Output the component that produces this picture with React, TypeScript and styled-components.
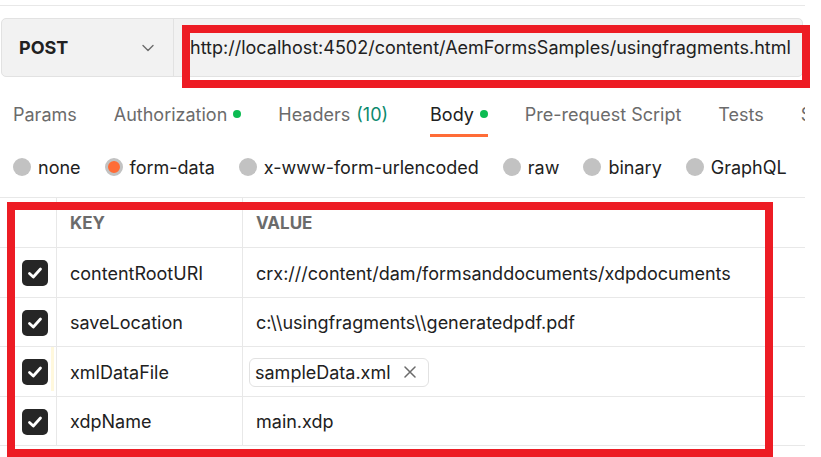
import React from "react";
import styled, { createGlobalStyle } from "styled-components";

const Global = createGlobalStyle`
  html, body { margin: 0; padding: 0; background: #ffffff; }
  body { font-family: Inter, "Noto Sans", "Liberation Sans", sans-serif; color: #212121; }
`;

const Page = styled.div`
  position: relative;
  width: 821px;
  height: 457px;
  overflow: hidden;
  background: #fff;
`;

const Content = styled.div`
  width: 805px;
  padding-top: 5px;
`;

const TopRule = styled.div`
  height: 0;
  border-top: 1px solid #e8e8e8;
`;

const RequestBar = styled.div`
  display: flex;
  height: 59px;
  margin: 12px 2px 0 1px;
  background: #f2f2f2;
  border: 1px solid #e2e2e2;
  border-radius: 5px;
  box-sizing: border-box;
`;

const MethodBox = styled.div`
  display: flex;
  align-items: center;
  justify-content: space-between;
  width: 172px;
  padding: 0 18px 0 17px;
  box-sizing: border-box;
  border-right: 1px solid #e2e2e2;
  font-weight: 700;
  font-size: 18px;
  color: #212121;
`;

const UrlBox = styled.div`
  flex: 1;
  display: flex;
  align-items: center;
  padding: 0 0 0 16px;
  font-size: 18px;
  color: #212121;
  white-space: nowrap;
  overflow: hidden;
`;

const Tabs = styled.div`
  display: flex;
  height: 60px;
  padding-left: 13px;
  gap: 37px;
  white-space: nowrap;
  overflow: hidden;
`;

const Tab = styled.div<{ $active?: boolean; $extra?: number }>`
  position: relative;
  display: flex;
  align-items: center;
  gap: 6px;
  height: 60px;
  margin-left: ${(p) => p.$extra ?? 0}px;
  padding-top: 14px;
  box-sizing: border-box;
  font-size: 18px;
  color: ${(p) => (p.$active ? "#212121" : "#6b6b6b")};
  &::after {
    content: "";
    display: ${(p) => (p.$active ? "block" : "none")};
    position: absolute;
    left: 0;
    right: 0;
    bottom: 0;
    height: 3px;
    background: #ff6c37;
  }
`;

const Dot = styled.span`
  width: 8px;
  height: 8px;
  border-radius: 50%;
  background: #0cbb52;
`;

const Count = styled.span`
  color: #0c8a6e;
`;

const RadioRow = styled.div`
  display: flex;
  align-items: center;
  height: 61px;
  padding-left: 13px;
  gap: 24px;
  border-bottom: 1px solid #e8e8e8;
  box-sizing: border-box;
  white-space: nowrap;
`;

const RadioItem = styled.div`
  display: flex;
  align-items: center;
  gap: 7px;
  font-size: 18px;
  color: #212121;
`;

const RadioCircle = styled.span<{ $checked?: boolean }>`
  width: 18px;
  height: 18px;
  border-radius: 50%;
  box-sizing: border-box;
  background: ${(p) => (p.$checked ? "#ff6c37" : "#c2c2c2")};
  border: ${(p) => (p.$checked ? "3px solid #c2c2c2" : "none")};
`;

const Table = styled.div`
  display: grid;
  grid-template-columns: 57px 186px 1fr;
`;

const Cell = styled.div<{ $head?: boolean; $last?: boolean; $check?: boolean; $h: number }>`
  position: relative;
  display: flex;
  align-items: center;
  height: ${(p) => p.$h}px;
  padding-left: ${(p) => (p.$check ? 15 : 13)}px;
  padding-top: ${(p) => (p.$head ? 0 : 1)}px;
  box-sizing: border-box;
  border-bottom: 1px solid #e8e8e8;
  border-right: ${(p) => (p.$last ? "none" : "1px solid #e8e8e8")};
  font-size: ${(p) => (p.$head ? 17 : 18)}px;
  font-weight: ${(p) => (p.$head ? 700 : 400)};
  color: ${(p) => (p.$head ? "#6b6b6b" : "#212121")};
  white-space: nowrap;
`;

const Marker = styled.span`
  position: absolute;
  right: 2px;
  top: 0;
  bottom: 5px;
  width: 3px;
  background: #fff8dd;
`;

const Check = styled.span`
  display: flex;
  align-items: center;
  justify-content: center;
  width: 26px;
  height: 26px;
  margin-left: 7px;
  border-radius: 5px;
  background: #262626;
`;

const Chip = styled.span`
  display: flex;
  align-items: center;
  gap: 13px;
  height: 29px;
  margin-left: -7px;
  padding: 0 12px 0 5px;
  border: 1px solid #e2e2e2;
  border-radius: 6px;
  box-sizing: border-box;
`;

const Annotation = styled.div<{ $l: number; $t: number; $w: number; $h: number }>`
  position: absolute;
  left: ${(p) => p.$l}px;
  top: ${(p) => p.$t}px;
  width: ${(p) => p.$w}px;
  height: ${(p) => p.$h}px;
  border: 8px solid #ed1c24;
  box-sizing: border-box;
  pointer-events: none;
`;

const Chevron = () => (
  <svg width="14" height="14" viewBox="0 0 14 14" fill="none">
    <path d="M2 4.5 L7 9.5 L12 4.5" stroke="#6b6b6b" strokeWidth="1.4" strokeLinecap="round" strokeLinejoin="round" />
  </svg>
);

const Tick = () => (
  <svg width="18" height="18" viewBox="0 0 18 18" fill="none">
    <path d="M3.5 9.5 L7.3 13 L14.5 5" stroke="#fff" strokeWidth="2.8" strokeLinecap="round" strokeLinejoin="round" />
  </svg>
);

const Close = () => (
  <svg width="12" height="12" viewBox="0 0 12 12" fill="none">
    <path d="M1 1 L11 11 M11 1 L1 11" stroke="#6b6b6b" strokeWidth="1.5" strokeLinecap="round" />
  </svg>
);

const rows: { key: string; value: React.ReactNode; h: number; marker?: boolean }[] = [
  { key: "contentRootURI", h: 50, value: "crx:///content/dam/formsanddocuments/xdpdocuments" },
  { key: "saveLocation", h: 49, value: "c:\\\\usingfragments\\\\generatedpdf.pdf" },
  {
    key: "xmlDataFile",
    h: 50,
    marker: true,
    value: (
      <Chip>
        sampleData.xml
        <Close />
      </Chip>
    ),
  },
  { key: "xdpName", h: 49, value: "main.xdp" },
];

export default function App() {
  return (
    <Page>
      <Global />
      <Content>
        <TopRule />
        <RequestBar>
          <MethodBox>
            POST
            <Chevron />
          </MethodBox>
          <UrlBox>http://localhost:4502/content/AemFormsSamples/usingfragments.html</UrlBox>
        </RequestBar>
        <Tabs>
          <Tab>Params</Tab>
          <Tab>
            Authorization <Dot />
          </Tab>
          <Tab>
            Headers <Count>(10)</Count>
          </Tab>
          <Tab $active $extra={5}>
            Body <Dot />
          </Tab>
          <Tab>Pre-request Script</Tab>
          <Tab>Tests</Tab>
          <Tab>Settings</Tab>
        </Tabs>
        <RadioRow>
          <RadioItem>
            <RadioCircle />
            none
          </RadioItem>
          <RadioItem>
            <RadioCircle $checked />
            form-data
          </RadioItem>
          <RadioItem>
            <RadioCircle />
            x-www-form-urlencoded
          </RadioItem>
          <RadioItem>
            <RadioCircle />
            raw
          </RadioItem>
          <RadioItem>
            <RadioCircle />
            binary
          </RadioItem>
          <RadioItem>
            <RadioCircle />
            GraphQL
          </RadioItem>
        </RadioRow>
        <Table>
          <Cell $head $h={50} />
          <Cell $head $h={50}>KEY</Cell>
          <Cell $head $last $h={50}>VALUE</Cell>
          {rows.map((r) => (
            <React.Fragment key={r.key}>
              <Cell $check $h={r.h}>
                <Check>
                  <Tick />
                </Check>
                {r.marker && <Marker />}
              </Cell>
              <Cell $h={r.h}>{r.key}</Cell>
              <Cell $last $h={r.h}>{r.value}</Cell>
            </React.Fragment>
          ))}
        </Table>
      </Content>
      <Annotation $l={182} $t={25} $w={628} $h={63} />
      <Annotation $l={7} $t={202} $w={766} $h={255} />
    </Page>
  );
}
